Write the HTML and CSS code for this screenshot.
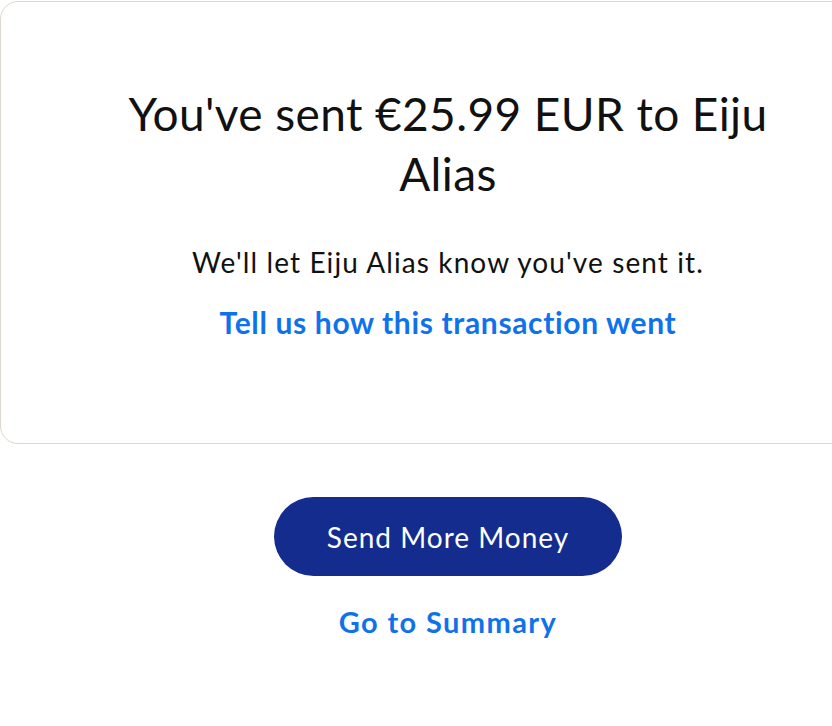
FILE: index.html
```html
<!DOCTYPE html>
<html>
<head>
<meta charset="utf-8">
<link rel="stylesheet" href="styles.css">
</head>
<body>
<div class="page">
  <section class="card">
    <h1 class="title">You've sent €25.99 EUR to Eiju Alias</h1>
    <p class="note">We'll let Eiju Alias know you've sent it.</p>
    <a class="link feedback" href="#">Tell us how this transaction went</a>
  </section>
  <div class="actions">
    <a class="btn-primary" href="#">Send More Money</a>
    <a class="link summary" href="#">Go to Summary</a>
  </div>
</div>
</body>
</html>
```
FILE: styles.css
```css
html, body {
  margin: 0;
  padding: 0;
  background: #ffffff;
}
body {
  font-family: Lato, "Noto Sans", sans-serif;
  color: #111111;
  overflow: hidden;
}
.page {
  width: 896px;
  padding-top: 1px;
}
.card {
  box-sizing: border-box;
  width: 896px;
  height: 443px;
  border: 1px solid #dcd8cf;
  border-radius: 18px;
  display: flex;
  flex-direction: column;
  align-items: center;
  padding-top: 82px;
}
.title {
  margin: 0;
  width: 680px;
  text-align: center;
  font-size: 46px;
  line-height: 60px;
  font-weight: 400;
  letter-spacing: 0.4px;
}
.note {
  margin: 40px 0 0;
  font-size: 28px;
  line-height: 36px;
  letter-spacing: 1.1px;
}
.link {
  color: #1072eb;
  font-weight: 700;
  text-decoration: none;
  line-height: 36px;
}
.feedback {
  margin-top: 24px;
  font-size: 30px;
  letter-spacing: 0.65px;
}
.actions {
  display: flex;
  flex-direction: column;
  align-items: center;
  padding-top: 53px;
}
.btn-primary {
  box-sizing: border-box;
  width: 348px;
  height: 79px;
  border-radius: 40px;
  background: #142c8e;
  color: #ffffff;
  text-decoration: none;
  font-size: 28px;
  letter-spacing: 1px;
  display: flex;
  align-items: center;
  justify-content: center;
}
.summary {
  margin-top: 28px;
  font-size: 29px;
  letter-spacing: 1.4px;
}
```
